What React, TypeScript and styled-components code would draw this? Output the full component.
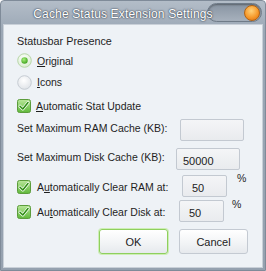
import React from "react"
import { styled, createGlobalStyle } from "styled-components"

const Global = createGlobalStyle`
  html, body {
    margin: 0;
    padding: 0;
    background: #ffffff;
  }
  body {
    font-family: "Liberation Sans", Arial, sans-serif;
  }
`

function CheckIcon() {
  return (
    <Icon width="14" height="14" viewBox="0 0 14 14">
      <defs>
        <linearGradient id="cbg" x1="0" y1="0" x2="0" y2="1">
          <stop offset="0" stopColor="#b9e79a" />
          <stop offset="1" stopColor="#5fb83a" />
        </linearGradient>
      </defs>
      <rect x="0.5" y="0.5" width="13" height="13" rx="2" fill="url(#cbg)" stroke="#5c9c3c" />
      <path d="M3 7.2 L5.8 10 L11 3.6" fill="none" stroke="#ffffff" strokeWidth="3" strokeLinecap="round" strokeLinejoin="round" />
      <path d="M3 7.2 L5.8 10 L11 3.6" fill="none" stroke="#2f8f14" strokeWidth="1.6" strokeLinecap="round" strokeLinejoin="round" />
    </Icon>
  )
}

function RadioIcon({ on }: { on?: boolean }) {
  return (
    <Icon width="15" height="15" viewBox="0 0 15 15">
      <defs>
        <radialGradient id={on ? "rgOn" : "rgOff"} cx="0.45" cy="0.35" r="0.7">
          <stop offset="0" stopColor="#ffffff" />
          <stop offset="1" stopColor={on ? "#d8eccd" : "#dde1e6"} />
        </radialGradient>
        <radialGradient id="dot" cx="0.4" cy="0.35" r="0.7">
          <stop offset="0" stopColor="#a6f07a" />
          <stop offset="1" stopColor="#3c9f1a" />
        </radialGradient>
      </defs>
      <circle cx="7.5" cy="7.5" r="6.8" fill={`url(#${on ? "rgOn" : "rgOff"})`} stroke={on ? "#b8d6a8" : "#c6ccd3"} />
      {on && <circle cx="7.5" cy="7.5" r="3.2" fill="url(#dot)" />}
    </Icon>
  )
}

export default function App() {
  return (
    <>
      <Global />
      <Window>
        <TitleBar>
          <CloseTrack>
            <CloseDot />
          </CloseTrack>
          <Title>Cache Status Extension Settings</Title>
        </TitleBar>
        <Panel>
          <Heading>Statusbar Presence</Heading>
          <OptionRow $h={21}>
            <RadioIcon on />
            <Label>
              <u>O</u>riginal
            </Label>
          </OptionRow>
          <OptionRow $h={22}>
            <RadioIcon />
            <Label>
              <u>I</u>cons
            </Label>
          </OptionRow>
          <OptionRow $h={25}>
            <CheckIcon />
            <Label>
              <u>A</u>utomatic Stat Update
            </Label>
          </OptionRow>
          <FieldRow $col={164} $h={24}>
            <PlainLabel>Set Maximum RAM Cache (KB):</PlainLabel>
            <Input />
          </FieldRow>
          <FieldRow $col={160} $h={27} $gap={3}>
            <PlainLabel>Set Maximum Disk Cache (KB):</PlainLabel>
            <Input>50000</Input>
          </FieldRow>
          <FieldRow $col={166} $h={27} $gap={0}>
            <CheckLabel>
              <CheckIcon />
              <Label>
                A<u>u</u>tomatically Clear RAM at:
              </Label>
            </CheckLabel>
            <SmallInput>50</SmallInput>
            <Percent>%</Percent>
          </FieldRow>
          <FieldRow $col={163} $h={26} $gap={-1}>
            <CheckLabel>
              <CheckIcon />
              <Label>
                Au<u>t</u>omatically Clear Disk at:
              </Label>
            </CheckLabel>
            <SmallInput>50</SmallInput>
            <Percent $nudge={-2}>%</Percent>
          </FieldRow>
          <Buttons>
            <Button $primary>OK</Button>
            <Button>Cancel</Button>
          </Buttons>
        </Panel>
      </Window>
    </>
  )
}

const Window = styled.div`
  width: 266px;
  height: 271px;
  box-sizing: border-box;
  display: flex;
  flex-direction: column;
  background: linear-gradient(#b3bdc8, #9ba7b5 30px, #95a1af);
  border: 1px solid #7f8b99;
  border-radius: 4px 4px 0 0;
  padding: 0 2px 2px 2px;
`
const Icon = styled.svg`
  flex-shrink: 0;
`
const TitleBar = styled.div`
  height: 23px;
  display: flex;
  align-items: center;
  position: relative;
`
const Title = styled.div`
  position: relative;
  flex: 1;
  text-align: center;
  padding-right: 20px;
  color: #ffffff;
  font-size: 12px;
  letter-spacing: 0.15px;
  white-space: nowrap;
  text-shadow: 0 0 2px rgba(40, 50, 65, 0.9), 0 0 1px rgba(40, 50, 65, 0.9);
  margin-top: 2px;
`
const CloseTrack = styled.div`
  position: absolute;
  right: 1px;
  top: 2px;
  width: 55px;
  height: 19px;
  box-sizing: border-box;
  border-radius: 10px;
  border: 1px solid #6f7b88;
  background: linear-gradient(#8894a2, #a7b1bd);
  box-shadow: inset 0 1px 2px rgba(0, 0, 0, 0.35);
  display: flex;
  align-items: center;
  justify-content: flex-end;
  padding-right: 1px;
`
const CloseDot = styled.div`
  width: 16px;
  height: 16px;
  border-radius: 50%;
  background: radial-gradient(circle at 45% 35%, #ffd27a, #f79a2c 55%, #d96a0c);
  border: 1px solid #b5630f;
  box-sizing: border-box;
`
const Panel = styled.div`
  flex: 1;
  display: flex;
  flex-direction: column;
  background: #eef2f6;
  border: 1px solid #c9d0d8;
  padding: 9px 0 0 12px;
  font-size: 10.5px;
  color: #1e1e1e;
`
const Heading = styled.div`
  height: 14px;
  line-height: 14px;
  margin-bottom: 2px;
  padding-left: 1px;
  font-size: 10.8px;
`
const OptionRow = styled.div<{ $h: number }>`
  height: ${(p) => p.$h}px;
  display: flex;
  align-items: center;
  gap: 5px;
  padding-left: 1px;
`
const Label = styled.span`
  line-height: 14px;
  white-space: nowrap;
`
const PlainLabel = styled.span`
  line-height: 14px;
  white-space: nowrap;
  padding-left: 1px;
  margin-top: -4px;
`
const CheckLabel = styled.div`
  display: flex;
  align-items: center;
  gap: 6px;
  padding-left: 1px;
  margin-top: 2px;
`
const FieldRow = styled.div<{ $col: number; $h: number; $gap?: number }>`
  height: ${(p) => p.$h}px;
  margin-top: ${(p) => p.$gap ?? 0}px;
  display: grid;
  grid-template-columns: ${(p) => p.$col}px max-content max-content;
  justify-content: start;
  align-items: center;
`
const Input = styled.div`
  width: 64px;
  height: 22px;
  box-sizing: border-box;
  border: 1px solid #c3c9d1;
  border-radius: 2px;
  background: linear-gradient(#f4f5f7, #e9ebee);
  padding: 4px 6px 0;
  line-height: 16px;
  color: #222;
  font-size: 11px;
`
const SmallInput = styled(Input)`
  width: 45px;
  padding-left: 9px;
`
const Percent = styled.span<{ $nudge?: number }>`
  align-self: start;
  margin-left: ${(p) => 10 + (p.$nudge ?? 0)}px;
  margin-top: 0px;
`
const Buttons = styled.div`
  display: flex;
  justify-content: flex-end;
  gap: 11px;
  padding-right: 14px;
  margin-top: 5px;
`
const Button = styled.div<{ $primary?: boolean }>`
  width: 69px;
  height: 25px;
  box-sizing: border-box;
  display: flex;
  align-items: center;
  justify-content: center;
  border-radius: 3px;
  border: 1px solid ${(p) => (p.$primary ? "#8fcf5e" : "#c4cad2")};
  box-shadow: ${(p) => (p.$primary ? "0 0 0 1px #cdeeb5" : "none")};
  background: linear-gradient(#ffffff, #f1f3f5 60%, #e6e9ed);
  color: #222;
  font-size: 11px;
`
